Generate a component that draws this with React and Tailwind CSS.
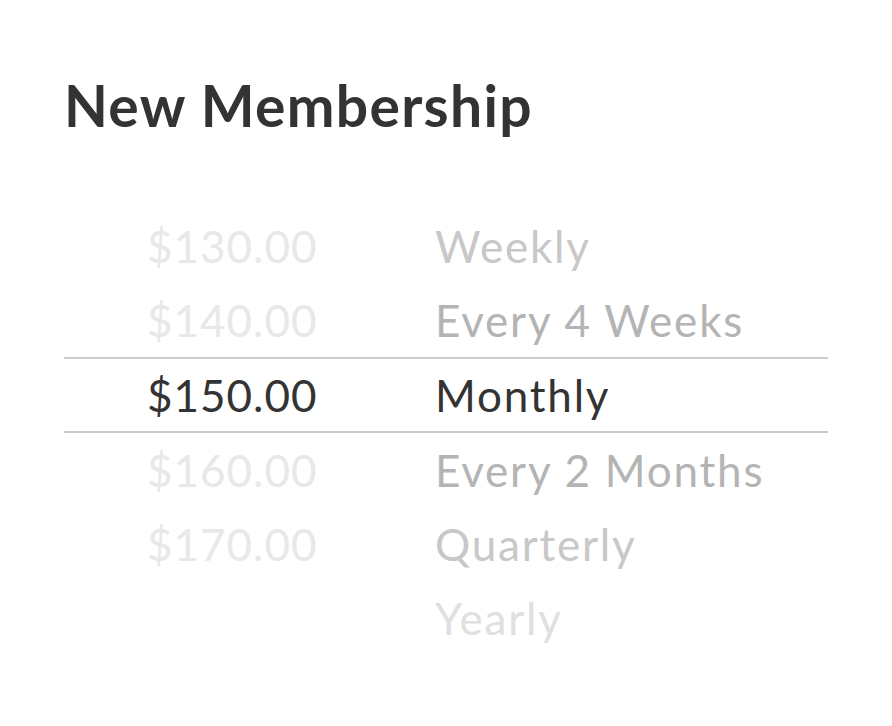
export default function App() {
  const rows = [
    { price: "$130.00", period: "Weekly", pc: "text-[#e8e8e8]", tc: "text-[#c8c8c8]" },
    { price: "$140.00", period: "Every 4 Weeks", pc: "text-[#e8e8e8]", tc: "text-[#b4b4b4]" },
    { price: "$150.00", period: "Monthly", pc: "text-[#333333]", tc: "text-[#333333]", sel: true },
    { price: "$160.00", period: "Every 2 Months", pc: "text-[#e8e8e8]", tc: "text-[#b4b4b4]" },
    { price: "$170.00", period: "Quarterly", pc: "text-[#e8e8e8]", tc: "text-[#c8c8c8]" },
    { price: "", period: "Yearly", pc: "text-[#e8e8e8]", tc: "text-[#e0e0e0]" },
  ];
  return (
    <div className="w-[892px] h-[726px] bg-white px-[64px] pt-[72px]" style={{ fontFamily: "Lato, 'Open Sans', sans-serif" }}>
      <h1 className="text-[57px] leading-[66px] font-bold text-[#333333] tracking-[1.3px]">New Membership</h1>
      <div className="mt-[71px] w-[764px]">
        {rows.map((r, i) => (
          <div
            key={i}
            className={`flex items-center ${r.sel ? "h-[76px] border-y-2 border-[#cccccc]" : "h-[74px]"}`}
          >
            <div className={`w-[371px] pl-[83px] text-[44px] tracking-[1px] ${r.pc}`}>{r.price}</div>
            <div className={`text-[44px] tracking-[1.8px] ${r.tc}`}>{r.period}</div>
          </div>
        ))}
      </div>
    </div>
  );
}
